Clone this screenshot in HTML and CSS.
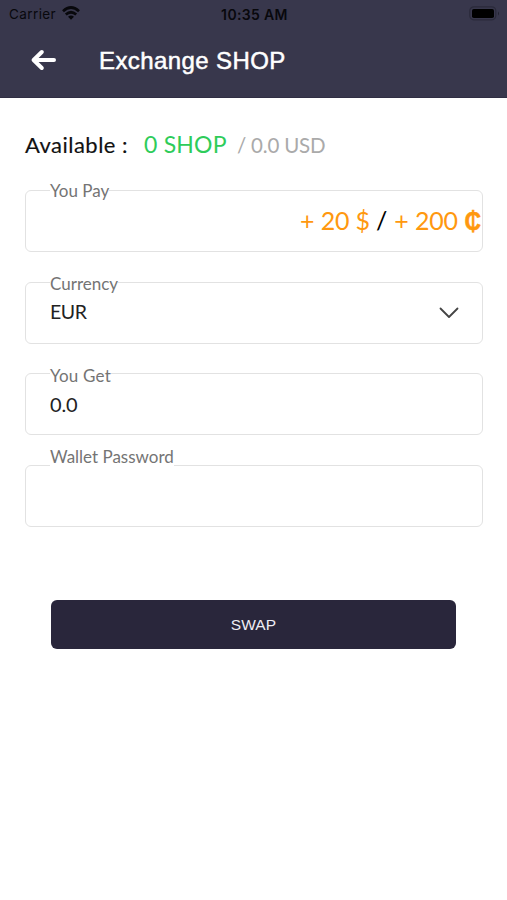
FILE: index.html
```
<!DOCTYPE html>
<html lang="en">
<head>
<meta charset="utf-8">
<title>Exchange SHOP</title>
<link rel="stylesheet" href="styles.css">
</head>
<body>
<header class="header">
  <div class="status">
    <div class="carrier"><span>Carrier</span>
      <svg class="wifi" width="18" height="14" viewBox="0 0 18 14" fill="none" stroke="#08080c" stroke-width="2.7"><path d="M1 5.2Q9-2.2 17 5.2M3.8 8.5Q9 4 14.2 8.5"/><path d="M6 10.8Q9 8.4 12 10.8L9 13.8Z" fill="#08080c" stroke="none"/></svg>
    </div>
    <time class="clock">10:35 AM</time>
    <svg class="battery" width="31" height="15" viewBox="0 0 31 15"><rect x=".8" y=".8" width="26" height="13" rx="4" fill="none" stroke="#2a2a3a" stroke-width="1.2"/><rect x="3" y="3" width="22" height="9" rx="1.8" fill="#000"/><path d="M29 5.5q2 2 0 4z" fill="#222230"/></svg>
  </div>
  <div class="titlebar">
    <svg class="back" width="26" height="22" viewBox="0 0 26 22" fill="none" stroke="#fff" stroke-width="4" stroke-linecap="round" stroke-linejoin="round"><path d="M24 11H4M11.8 3L3.6 11L11.8 19"/></svg>
    <h1 class="title">Exchange SHOP</h1>
  </div>
</header>
<main class="content">
  <div class="balance"><span class="available">Available :</span><span class="shop">0 SHOP</span><span class="usd">/ 0.0 USD</span></div>
  <form class="form">
    <div class="field pay"><label class="label label-pay">You Pay</label>
      <div class="amounts"><span class="plus-usd">+ 20 $</span><span class="slash">/</span><span class="plus-cent">+ 200</span><span class="cent">₵</span></div>
    </div>
    <div class="field"><label class="label label-currency">Currency</label><span class="value eur">EUR</span>
      <svg class="chevron" width="20" height="12" viewBox="0 0 20 12" fill="none" stroke="#444" stroke-width="1.8" stroke-linecap="round" stroke-linejoin="round"><path d="M1.5 1.5L10 10L18.5 1.5"/></svg>
    </div>
    <div class="field"><label class="label label-get">You Get</label><span class="value zero">0.0</span></div>
    <div class="field"><label class="label label-password">Wallet Password</label></div>
    <button class="swap" type="button">SWAP</button>
  </form>
</main>
</body>
</html>
```
FILE: styles.css
```
* { box-sizing: border-box; }
body { margin: 0; background: #fff; font-family: Lato, sans-serif; }
.header { height: 98px; background: #38374c; border-bottom: 1px solid #302e43; }
.status { height: 28px; display: grid; grid-template-columns: 1fr auto 1fr; align-items: center; padding: 0 7px 0 9px; font-family: Inter, sans-serif; color: #08080c; }
.carrier { display: flex; align-items: center; gap: 6px; font-size: 13.5px; letter-spacing: .4px; }
.wifi { margin-top: -3px; }
.clock { font-size: 14px; font-weight: 600; letter-spacing: .35px; }
.battery { justify-self: end; margin-top: -2px; }
.titlebar { display: flex; align-items: center; height: 64px; padding-left: 30px; }
.title { margin: 2px 0 0 43px; font: 400 24px/30px "Liberation Sans", sans-serif; color: #fff; -webkit-text-stroke: .5px #fff; letter-spacing: .4px; }
.content { padding: 30px 24px 0 25px; }
.balance { display: flex; align-items: baseline; height: 32px; line-height: 32px; white-space: nowrap; }
.available { width: 119px; font-size: 22px; color: #111; -webkit-text-stroke: .15px #111; letter-spacing: .48px; }
.shop { width: 93px; font-size: 23px; color: #2ecc5a; letter-spacing: .2px; }
.usd { font-size: 20.5px; color: #aaa; letter-spacing: -.2px; }
.form { padding-top: 30px; }
.field { position: relative; height: 62px; margin-bottom: 29.7px; border: 1px solid #e2e2e2; border-radius: 6px; display: flex; align-items: center; justify-content: space-between; padding: 0 23px 0 24px; }
.label { position: absolute; left: 24px; top: -11px; background: #fff; font-size: 17px; line-height: 22px; color: #747474; white-space: nowrap; }
.label-currency { top: -10px; }
.label-get { top: -9px; letter-spacing: .2px; }
.label-password { top: -20px; }
.value { font-size: 20px; line-height: 24px; color: #222; }
.eur { font-size: 19.5px; letter-spacing: -.4px; margin-top: -1px; }
.zero { letter-spacing: -.2px; }
.pay { padding: 0; justify-content: flex-end; }
.amounts { display: flex; align-items: baseline; font-size: 25px; line-height: 32px; color: #ff980f; white-space: nowrap; }
.plus-usd, .plus-cent { letter-spacing: -.15px; }
.slash { color: #000; margin: 0 7px 0 6px; }
.cent { margin-left: 7px; font-weight: 700; font-family: Roboto, sans-serif; -webkit-text-stroke: .5px #ff980f; margin-right: 1px; display: inline-block; transform: scaleX(.92); transform-origin: right; margin-left: 5px; }
.swap { display: block; width: 405px; height: 49px; margin: 73px 0 0 26px; padding: 0; border: 0; border-radius: 6px; background: #29263b; color: #eeedf5; font: 400 15.5px "Liberation Sans", sans-serif; letter-spacing: .15px; }
```
